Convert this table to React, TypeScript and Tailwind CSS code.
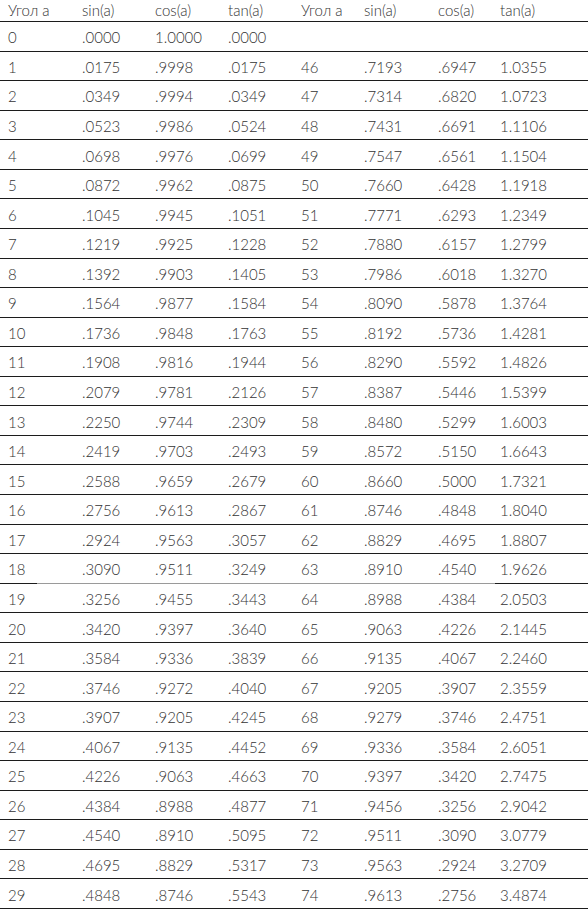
const left: string[][] = [
  ['0', '.0000', '1.0000', '.0000'],
  ['1', '.0175', '.9998', '.0175'],
  ['2', '.0349', '.9994', '.0349'],
  ['3', '.0523', '.9986', '.0524'],
  ['4', '.0698', '.9976', '.0699'],
  ['5', '.0872', '.9962', '.0875'],
  ['6', '.1045', '.9945', '.1051'],
  ['7', '.1219', '.9925', '.1228'],
  ['8', '.1392', '.9903', '.1405'],
  ['9', '.1564', '.9877', '.1584'],
  ['10', '.1736', '.9848', '.1763'],
  ['11', '.1908', '.9816', '.1944'],
  ['12', '.2079', '.9781', '.2126'],
  ['13', '.2250', '.9744', '.2309'],
  ['14', '.2419', '.9703', '.2493'],
  ['15', '.2588', '.9659', '.2679'],
  ['16', '.2756', '.9613', '.2867'],
  ['17', '.2924', '.9563', '.3057'],
  ['18', '.3090', '.9511', '.3249'],
  ['19', '.3256', '.9455', '.3443'],
  ['20', '.3420', '.9397', '.3640'],
  ['21', '.3584', '.9336', '.3839'],
  ['22', '.3746', '.9272', '.4040'],
  ['23', '.3907', '.9205', '.4245'],
  ['24', '.4067', '.9135', '.4452'],
  ['25', '.4226', '.9063', '.4663'],
  ['26', '.4384', '.8988', '.4877'],
  ['27', '.4540', '.8910', '.5095'],
  ['28', '.4695', '.8829', '.5317'],
  ['29', '.4848', '.8746', '.5543'],
];

const right: string[][] = [
  ['', '', '', ''],
  ['46', '.7193', '.6947', '1.0355'],
  ['47', '.7314', '.6820', '1.0723'],
  ['48', '.7431', '.6691', '1.1106'],
  ['49', '.7547', '.6561', '1.1504'],
  ['50', '.7660', '.6428', '1.1918'],
  ['51', '.7771', '.6293', '1.2349'],
  ['52', '.7880', '.6157', '1.2799'],
  ['53', '.7986', '.6018', '1.3270'],
  ['54', '.8090', '.5878', '1.3764'],
  ['55', '.8192', '.5736', '1.4281'],
  ['56', '.8290', '.5592', '1.4826'],
  ['57', '.8387', '.5446', '1.5399'],
  ['58', '.8480', '.5299', '1.6003'],
  ['59', '.8572', '.5150', '1.6643'],
  ['60', '.8660', '.5000', '1.7321'],
  ['61', '.8746', '.4848', '1.8040'],
  ['62', '.8829', '.4695', '1.8807'],
  ['63', '.8910', '.4540', '1.9626'],
  ['64', '.8988', '.4384', '2.0503'],
  ['65', '.9063', '.4226', '2.1445'],
  ['66', '.9135', '.4067', '2.2460'],
  ['67', '.9205', '.3907', '2.3559'],
  ['68', '.9279', '.3746', '2.4751'],
  ['69', '.9336', '.3584', '2.6051'],
  ['70', '.9397', '.3420', '2.7475'],
  ['71', '.9456', '.3256', '2.9042'],
  ['72', '.9511', '.3090', '3.0779'],
  ['73', '.9563', '.2924', '3.2709'],
  ['74', '.9613', '.2756', '3.4874'],
];

const header = ['Угол а', 'sin(a)', 'cos(a)', 'tan(a)', 'Угол а', 'sin(a)', 'cos(a)', 'tan(a)'];

const cols = 'grid grid-cols-[74px_73px_73px_73px_63px_74px_62px_1fr]';

export default function App() {
  return (
    <div className="w-[588px] h-[910px] bg-white text-[#333333] text-[15px] font-light overflow-hidden" style={{ fontFamily: 'Lato, "Noto Sans", sans-serif' }}>
      {/* Header */}
      <div className={`${cols} h-[22px] items-center border-b border-[#1c1c1c]`}>
        {header.map((h, i) => (
          <span key={i} className="pl-2 leading-none">{h}</span>
        ))}
      </div>

      {/* Rows */}
      {left.map((row, r) => {
        const cells = [...row, ...right[r]];
        return (
          <div key={r} className="h-[29.57px] flex flex-col">
            <div className={`${cols} flex-1 items-center pt-[3px]`}>
              {cells.map((c, i) => (
                <span key={i} className="pl-2 leading-none">{c}</span>
              ))}
            </div>
            {r === 18 ? (
              <div className="h-px flex">
                <div className="w-[37px] bg-[#1c1c1c]" />
                <div className="flex-1 bg-[#9a9a9a]" />
                <div className="w-[93px] bg-[#1c1c1c]" />
              </div>
            ) : (
              <div className="h-px bg-[#1c1c1c]" />
            )}
          </div>
        );
      })}
    </div>
  );
}
